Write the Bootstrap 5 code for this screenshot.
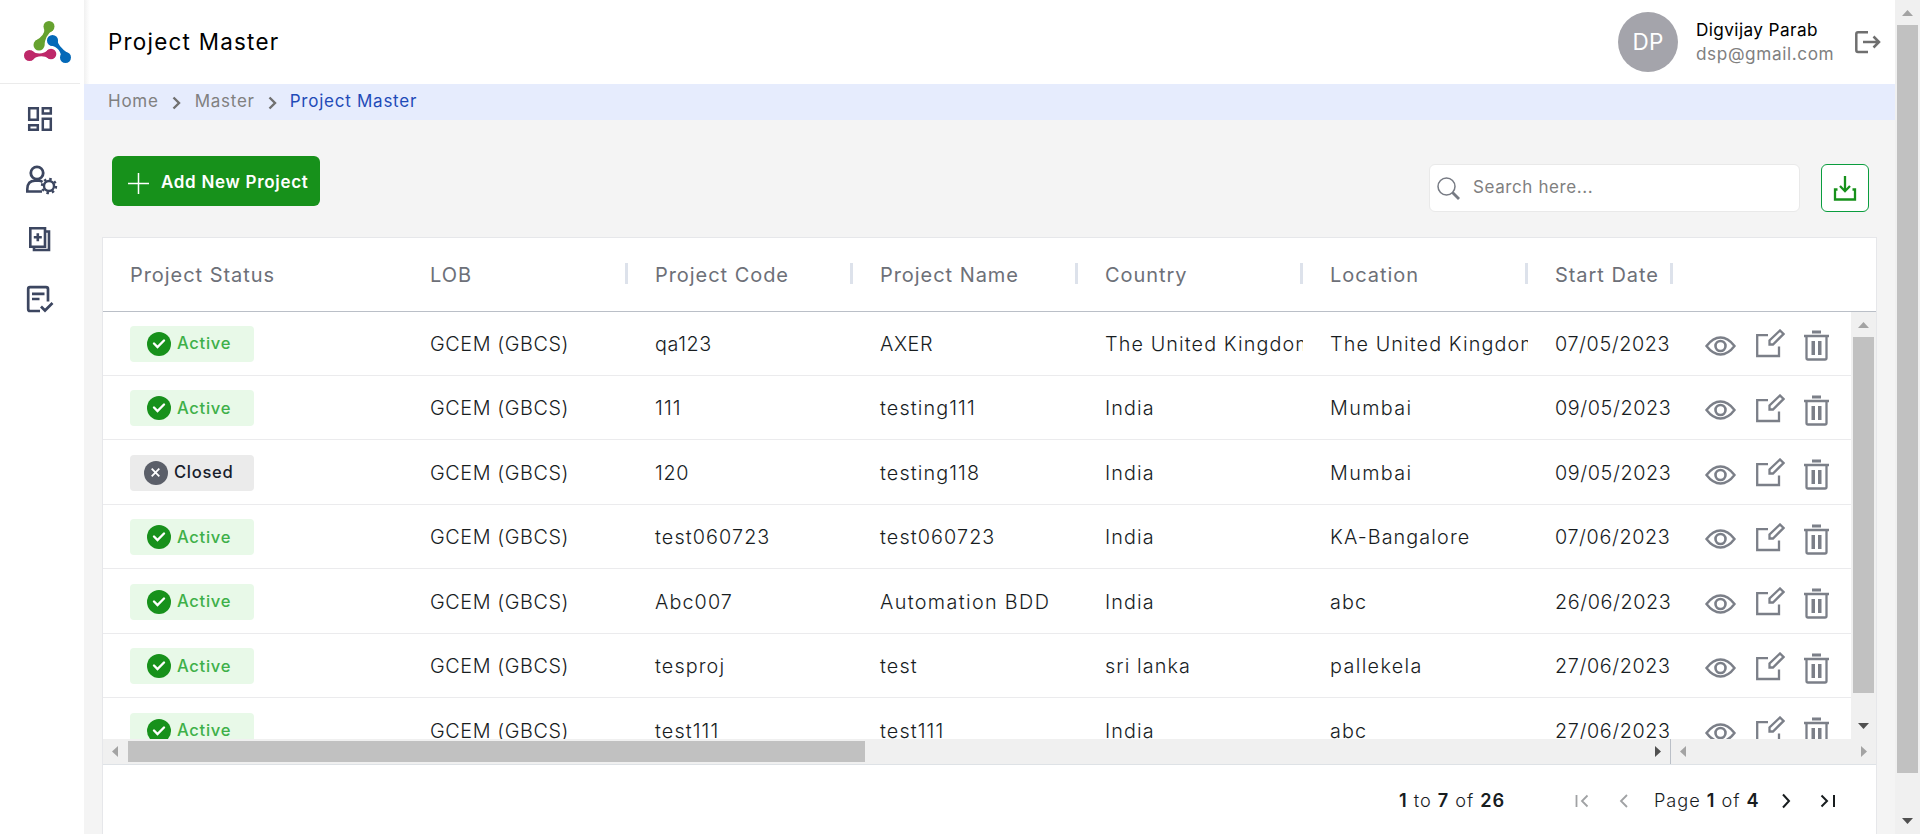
<!DOCTYPE html>
<html lang="en">
<head>
<meta charset="utf-8">
<meta name="viewport" content="width=device-width, initial-scale=1">
<title>Project Master</title>
<link href="https://cdn.jsdelivr.net/npm/bootstrap@5.3.0/dist/css/bootstrap.min.css" rel="stylesheet">
<style>
html,body{height:100%;overflow:hidden}
body{font-family:Inter,"Liberation Sans",sans-serif;background:#f4f4f4;color:#181d1f}
svg{display:block;flex:none}
.rail{width:84px;background:#fff}
.rail-logo{height:84px;width:80px;border-bottom:1px solid #ebebeb;padding:20px 0 0 23px}
.rail-nav{padding:20px 0 0 24px;color:#3c4660}
.rail-nav a{color:inherit;height:60px}
.topbar{height:84px;background:linear-gradient(90deg,#f1f1f1,#fff 6px);padding:0 14px 0 24px}
.page-title{font-size:22.4px;font-weight:400;color:#000;letter-spacing:1.25px;padding-top:1px}
.avatar{width:60px;height:60px;background:#a4a4ab;color:#fff;font-size:22.5px;letter-spacing:.3px}
.user-box{width:159px;margin:0 0 0 18px;line-height:24px;font-size:17.2px;white-space:nowrap}
.user-name{color:#000;letter-spacing:.4px}
.user-mail{color:#808080;letter-spacing:.6px}
.crumbs{height:36px;background:#e6ecfd;padding:0 0 1px 24px;font-size:17px;letter-spacing:.75px;color:#808080}
.crumbs .sep{margin:2px 14px 0 13px}
.crumbs .here{color:#1f4bb8;margin-left:-1px}
.tools{height:117px;padding:0 26px 0 28px}
.btn-add{width:208px;height:50px;margin-top:36px;padding:4px 0 0 16px;background:#17911b;color:#fff;font-weight:600;font-size:17px;letter-spacing:.7px;border-radius:6px}
.search-box{width:371px;height:48px;margin:44px 21px 0 0;padding-left:7px;background:#fff;border:1px solid #e9e9e9;border-radius:6px;font-size:17px;letter-spacing:.6px;color:#808080}
.search-box span{padding-left:13px}
.btn-down{width:48px;height:48px;margin-top:44px;background:#fff;border:1.5px solid #0a9d3e;border-radius:6px}
.grid-box{width:1775px;margin-left:18px;border:1px solid #e6e7ea;background:#fff}
.grid-head{height:74px;border-bottom:1px solid #babfc7;font-size:20px;letter-spacing:.95px;color:#6d7078;padding-top:1px}
.cell{position:relative;width:225px;padding-left:27px;white-space:nowrap;overflow:hidden;flex:none}
.cell-first{width:300px}
.cell-date{width:143px}
.grip::after{content:"";position:absolute;right:0;top:50%;width:3px;height:21px;margin-top:-12px;background:#dde2eb}
.grid-head .cell-date{width:145px}
.grid-body{height:427px}
.rows{margin-top:-1px}
.grid-row{height:64.5px;padding-top:2px;border-bottom:1px solid #ebebed;font-size:19.8px;font-weight:300;letter-spacing:1.1px}
.grid-row .cell:not(.cell-first){padding-top:2px}
.grid-row .cell-tight,.grid-row .cell-date{letter-spacing:.6px}
.grid-row .cell-wide{letter-spacing:1.35px}
.state{width:124px;height:36px;border-radius:4px;font-size:16.6px;font-weight:500;letter-spacing:.7px;gap:6px}
.state-on{background:#e8f9e8;color:#3eb049;padding-left:17px}
.state-off{background:#ebebeb;color:#181d2b;padding-left:14px}
.acts{padding-left:34px;color:#7b7f88}
.bar{background:#f0f0f0}
.bar-v{width:25px}
.bar-h{height:25px}
.thumb{background:#c1c1c1}
.bar-v .thumb{width:21px;margin:0 auto}
.foot{height:72px;font-size:18.2px;letter-spacing:.95px;white-space:nowrap;font-weight:300}
.foot span{padding-top:1px}
.foot b{font-weight:600}
</style>
</head>
<body>
<svg width="0" height="0" class="position-absolute">
  <symbol id="eye" viewBox="0 0 31 20"><path d="M1.500 10Q8 1.500 15.500 1.500T29.500 10Q23 18.500 15.500 18.500T1.500 10Z" fill="none" stroke="currentColor" stroke-width="2.400"/><circle cx="15.500" cy="10" r="5" fill="none" stroke="currentColor" stroke-width="2.600"/></symbol>
  <symbol id="edit" viewBox="0 0 29 29"><path d="M12 6.200H1.200V27H23V17.500M13.500 15.500V11.500L24 1.500L27.500 5L17 15.500Z" fill="none" stroke="currentColor" stroke-width="2.300"/></symbol>
  <symbol id="trash" viewBox="0 0 25 31"><path d="M0 6H25M2.500 6V28Q2.500 29.500 4 29.500H21Q22.500 29.500 22.500 28V6" fill="none" stroke="currentColor" stroke-width="2.300"/><path d="M8 .5H17V3.500H8ZM7.500 11H11V25H7.500ZM14 11H17.500V25H14Z" fill="currentColor"/></symbol>
  <symbol id="on" viewBox="0 0 24 24"><circle cx="12" cy="12" r="12" fill="#17911b"/><path d="M7 11.500L10.500 15L17 8.500" fill="none" stroke="#fff" stroke-width="2.400" stroke-linecap="round"/></symbol>
  <symbol id="off" viewBox="0 0 24 24"><circle cx="12" cy="12" r="12" fill="#5b5f69"/><path d="M7.700 7.700L15.300 15.300M15.300 7.700L7.700 15.300" fill="none" stroke="#fff" stroke-width="1.800"/></symbol>
  <symbol id="sep" viewBox="0 0 9 14"><path d="M1.500 1.500L7 7L1.500 12.500" fill="none" stroke="#707070" stroke-width="2.400"/></symbol>
</svg>

<div class="d-flex h-100">
  <aside class="rail flex-shrink-0">
    <div class="rail-logo">
      <svg width="50" height="44" viewBox="0 0 50 44">
        <path d="M12 21Q22 16 21.500 8L30 10Q22 15 21 27Z" fill="#66a22f"/><circle cx="26" cy="6.500" r="5.500" fill="#66a22f"/><circle cx="16" cy="25" r="5.500" fill="#66a22f"/>
        <path d="M34.500 19Q34 26 46 34L38 39Q39 28 27 25Z" fill="#0469b8"/><circle cx="29.500" cy="20.500" r="5.500" fill="#0469b8"/><circle cx="42.500" cy="37.500" r="5.500" fill="#0469b8"/>
        <path d="M8 30.500Q17 37 26 29.500V38.500Q17 33 8 40.500Z" fill="#be2869"/><circle cx="6.500" cy="35.500" r="5.500" fill="#be2869"/><circle cx="28" cy="34" r="5.300" fill="#be2869"/>
      </svg>
    </div>
    <nav class="rail-nav d-flex flex-column">
      <a href="#"><svg width="32" height="32" viewBox="0 0 32 32" fill="none" stroke="currentColor" stroke-width="2.500"><path d="M5.200 4.200H13.800V15.800H5.200ZM18.800 4.200H26.800V9.500H18.800ZM18.800 14.800H26.800V25.800H18.800ZM5.200 21.200H13.800V25.800H5.200Z"/></svg></a>
      <a href="#"><svg width="36" height="34" viewBox="0 0 36 34" fill="none" stroke="currentColor"><circle cx="13" cy="9" r="6.200" stroke-width="2.800"/><path d="M18 27.500H3.300V25Q3.500 16.800 11 16.800H15Q17 16.800 18.500 18" stroke-width="2.600"/><circle cx="25" cy="22" r="5" stroke-width="2.400"/><circle cx="25" cy="22" r="7" stroke-width="2.400" stroke-dasharray="2.500 3"/></svg></a>
      <a href="#"><svg width="32" height="32" viewBox="0 0 32 32" fill="none" stroke="currentColor" stroke-width="2.600"><path d="M6.300 4.200H21V22.800H6.300ZM21.500 7.500H25V26H10V23M13.800 9.300V17.300M9.800 13.300H17.800"/></svg></a>
      <a href="#"><svg width="32" height="32" viewBox="0 0 32 32" fill="none" stroke="currentColor" stroke-width="2.700"><path d="M16 27H6Q4.200 27 4.200 25V5Q4.200 3.200 6 3.200H22Q24 3.200 24 5V17.500M8 9.800H20.500M8 15H15.500M17 22.500L21 26.500L28.500 19"/></svg></a>
    </nav>
  </aside>

  <main class="flex-grow-1 overflow-hidden">
    <header class="topbar d-flex align-items-center">
      <h1 class="page-title mb-0 me-auto">Project Master</h1>
      <div class="avatar rounded-circle d-flex align-items-center justify-content-center">DP</div>
      <div class="user-box"><div class="user-name">Digvijay Parab</div><div class="user-mail">dsp@gmail.com</div></div>
      <svg width="26" height="24" viewBox="0 0 26 24" fill="none" stroke="#6f6f6f" stroke-width="2.500"><path d="M13 2.200H3Q1.300 2.200 1.300 4V20Q1.300 22 3 22H13M8 12H24M18.500 6.500L24 12L18.500 17.500"/></svg>
    </header>

    <nav class="crumbs d-flex align-items-center">
      <span>Home</span><svg class="sep" width="9" height="14"><use href="#sep"/></svg>
      <span>Master</span><svg class="sep" width="9" height="14"><use href="#sep"/></svg>
      <span class="here">Project Master</span>
    </nav>

    <section class="tools d-flex align-items-start">
      <button class="btn-add border-0 me-auto d-flex align-items-center"><svg class="me-2" width="21" height="21" viewBox="0 0 21 21" stroke="#fff" stroke-width="1.500"><path d="M10.500 0V21M0 10.500H21"/></svg><span class="ms-1">Add New Project</span></button>
      <div class="search-box d-flex align-items-center">
        <svg width="23" height="23" viewBox="0 0 23 23" fill="none" stroke="#777b84"><circle cx="9.500" cy="9.500" r="8.500" stroke-width="1.500"/><path d="M15.500 15.500L22 22" stroke-width="2.800"/></svg>
        <span>Search here...</span>
      </div>
      <button class="btn-down d-flex align-items-center justify-content-center p-0"><svg width="24" height="25" viewBox="0 0 24 25" fill="none" stroke="#17911b" stroke-width="2.300"><path d="M4.500 13.500H2V23.500H22V13.500H19.500M12 0V15M7 10L12 15.200L17 10"/></svg></button>
    </section>

    <section class="grid-box">
      <div class="grid-head d-flex align-items-center">
        <div class="cell cell-first">Project Status</div>
        <div class="cell grip">LOB</div><div class="cell grip">Project Code</div><div class="cell grip">Project Name</div>
        <div class="cell grip">Country</div><div class="cell grip">Location</div><div class="cell cell-date grip">Start Date</div>
      </div>
      <div class="grid-body d-flex overflow-hidden">
        <div class="rows flex-grow-1 overflow-hidden" id="rows"></div>
        <div class="bar bar-v">
          <svg width="25" height="25"><path d="M7 16H18L12.500 10Z" fill="#a3a3a3"/></svg>
          <div class="thumb" style="height:356px"></div>
          <svg style="margin-top:20px" width="25" height="25"><path d="M7 10H18L12.500 16Z" fill="#505050"/></svg>
        </div>
      </div>
      <div class="bar bar-h d-flex align-items-center">
        <svg width="25" height="25"><path d="M15 7V18L9 12.500Z" fill="#a3a3a3"/></svg>
        <div class="thumb" style="width:737px;height:21px"></div>
        <svg class="ms-auto" width="25" height="25"><path d="M10 7V18L16 12.500Z" fill="#505050"/></svg>
        <div class="border-start d-flex justify-content-between" style="width:206px;border-color:#babfc7!important">
          <svg width="25" height="25"><path d="M15 7V18L9 12.500Z" fill="#a3a3a3"/></svg>
          <svg width="25" height="25"><path d="M10 7V18L16 12.500Z" fill="#a3a3a3"/></svg>
        </div>
      </div>
      <div class="foot d-flex align-items-center justify-content-end border-top pe-4">
        <span style="width:176px"><b>1</b> to <b>7</b> of <b>26</b></span>
        <svg width="79" height="16" viewBox="0 0 79 16" fill="none" stroke="#a0a2a4" stroke-width="1.800"><path d="M1.500 2V14M12.500 2.500L7 8L12.500 13.500M52 2L46 8L52 14"/></svg>
        <span style="width:126px">Page <b>1</b> of <b>4</b></span>
        <svg class="me-3" width="56" height="16" viewBox="0 0 56 16" fill="none" stroke="#181d1f" stroke-width="2"><path d="M3 1.500L9 8L3 14.500M41.500 2.500L47 8L41.500 13.500M54 2V14"/></svg>
      </div>
    </section>
  </main>

  <div class="bar bar-v flex-shrink-0">
    <svg width="25" height="25"><path d="M7 16H18L12.500 10Z" fill="#a3a3a3"/></svg>
    <div class="thumb" style="height:748px"></div>
    <svg style="margin-top:35px" width="25" height="25"><path d="M7 10H18L12.500 16Z" fill="#505050"/></svg>
  </div>
</div>

<script src="https://cdn.jsdelivr.net/npm/bootstrap@5.3.0/dist/js/bootstrap.bundle.min.js"></script>
<script>
const projects = [
  ["Active", "qa123", "AXER", "The United Kingdom", "The United Kingdom", "07/05/2023"],
  ["Active", "111", "testing111", "India", "Mumbai", "09/05/2023"],
  ["Closed", "120", "testing118", "India", "Mumbai", "09/05/2023"],
  ["Active", "test060723", "test060723", "India", "KA-Bangalore", "07/06/2023"],
  ["Active", "Abc007", "Automation BDD", "India", "abc", "26/06/2023"],
  ["Active", "tesproj", "test", "sri lanka", "pallekela", "27/06/2023"],
  ["Active", "test111", "test111", "India", "abc", "27/06/2023"]
];
const wide = new Set(["Automation BDD", "Mumbai", "pallekela"]);
const tight = new Set(["AXER", "qa123", "120"]);
const cell = t => `<div class="cell ${wide.has(t) ? "cell-wide" : tight.has(t) ? "cell-tight" : ""}">${t}</div>`;
document.getElementById("rows").innerHTML = projects.map(([state, code, name, country, place, start]) => {
  const kind = state === "Active" ? "on" : "off";
  return `<div class="grid-row d-flex align-items-center">
    <div class="cell cell-first"><div class="state state-${kind} d-flex align-items-center"><svg width="24" height="24"><use href="#${kind}"/></svg>${state}</div></div>
    <div class="cell cell-tight">GCEM (GBCS)</div>${cell(code)}${cell(name)}${cell(country)}${cell(place)}
    <div class="cell cell-date">${start}</div>
    <div class="acts d-flex align-items-center"><svg class="mt-1" width="31" height="20"><use href="#eye"/></svg><svg class="ms-3 me-3 ps-1" width="33" height="29"><use href="#edit"/></svg><svg class="mt-1" style="margin-left:3px" width="25" height="31"><use href="#trash"/></svg></div>
  </div>`;
}).join("");
</script>
</body>
</html>
